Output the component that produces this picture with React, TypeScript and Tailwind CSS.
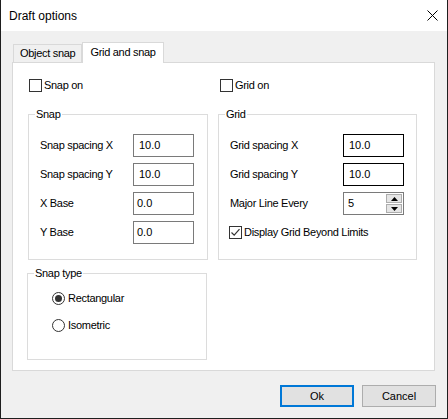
import React from 'react';

const font = "font-['Liberation_Sans',Arial,sans-serif]";

// Win32 style checkbox
const CheckBox = ({ label, checked = false }: { label: string; checked?: boolean }) => (
  <div className="flex items-center h-[13px]">
    <div className="w-[13px] h-[13px] border border-[#333333] bg-white flex items-center justify-center">
      {checked && (
        <svg width="11" height="11" viewBox="0 0 11 11">
          <path d="M1.5 5.5 L4.2 8.2 L9.5 2.2" fill="none" stroke="#333333" strokeWidth="1.2" />
        </svg>
      )}
    </div>
    <span className="ml-[2px] text-[11px] tracking-[-0.3px] leading-[13px] text-black">{label}</span>
  </div>
);

const Radio = ({ label, checked = false }: { label: string; checked?: boolean }) => (
  <div className="flex items-center h-[13px]">
    <div className="w-[13px] h-[13px] rounded-full border border-[#333333] bg-white flex items-center justify-center">
      {checked && <div className="w-[7px] h-[7px] rounded-full bg-[#333333]" />}
    </div>
    <span className="ml-[3px] text-[11px] tracking-[-0.3px] leading-[13px] text-black">{label}</span>
  </div>
);

const Group = ({ title, className, children }: { title: string; className: string; children: React.ReactNode }) => (
  <div className={`relative border border-[#dcdcdc] ${className}`}>
    <span className="absolute left-[6px] -top-[8px] px-[1px] bg-white text-[11px] tracking-[-0.3px] leading-[14px] text-black">
      {title}
    </span>
    {children}
  </div>
);

const Field = ({ value, dark = false, pad = 'pl-[5px]' }: { value: string; dark?: boolean; pad?: string }) => (
  <div
    className={`w-[61px] h-[23px] border bg-white flex items-center ${pad} text-[11px] text-black ${
      dark ? 'border-[#000000]' : 'border-[#7a7a7a]'
    }`}
  >
    {value}
  </div>
);

const Spinner = ({ value }: { value: string }) => (
  <div className="w-[61px] h-[23px] border border-[#7a7a7a] bg-white flex">
    <div className="flex-1 flex items-center pl-[4px] text-[11px] text-black">{value}</div>
    <div className="w-[17px] flex flex-col py-[1px] pr-[1px] gap-[1px]">
      <div className="flex-1 border border-[#adadad] bg-[#e5e5e5] flex items-center justify-center">
        <svg width="7" height="4" viewBox="0 0 7 4">
          <path d="M0 4 L3.5 0 L7 4 Z" fill="#000" />
        </svg>
      </div>
      <div className="flex-1 border border-[#adadad] bg-[#e5e5e5] flex items-center justify-center">
        <svg width="7" height="4" viewBox="0 0 7 4">
          <path d="M0 0 L7 0 L3.5 4 Z" fill="#000" />
        </svg>
      </div>
    </div>
  </div>
);

const Row = ({ label, labelW, children }: { label: string; labelW: string; children: React.ReactNode }) => (
  <div className="flex items-center h-[23px]">
    <div className={`${labelW} text-[11px] tracking-[-0.3px] text-black`}>{label}</div>
    {children}
  </div>
);

export default function App() {
  return (
    <div className={`w-[448px] h-[419px] flex flex-col border-x border-b border-[#1e1e1e] bg-[#f0f0f0] ${font}`}>
      {/* Title bar */}
      <div className="h-[31px] bg-white flex items-center justify-between pl-[8px] pr-[9px]">
        <span className="text-[12px] text-black">Draft options</span>
        <svg width="11" height="11" viewBox="0 0 11 11">
          <path d="M0.5 0.5 L10.5 10.5 M10.5 0.5 L0.5 10.5" stroke="#000" strokeWidth="1" />
        </svg>
      </div>

      <div className="flex-1 pt-[11px] px-[11px]">
        {/* Tabs */}
        <div className="flex items-end h-[20px]">
          <div className="ml-px h-[18px] px-[6px] border border-b-0 border-[#d9d9d9] bg-[#f0f0f0] flex items-center text-[11px] tracking-[-0.3px] text-black">
            Object snap
          </div>
          <div className="relative z-10 -mb-px h-[21px] px-[7px] border border-b-0 border-[#d9d9d9] bg-white flex items-center pb-[2px] text-[11px] tracking-[-0.3px] text-black">
            Grid and snap
          </div>
        </div>

        {/* Tab panel */}
        <div className="w-[423px] h-[309px] border border-[#d9d9d9] bg-white pt-[16px] pl-[15px]">
          <div className="flex">
            <div className="w-[190px] pl-px">
              <CheckBox label="Snap on" />
            </div>
            <div className="pl-[2px]">
              <CheckBox label="Grid on" />
            </div>
          </div>

          <div className="flex mt-[22px] gap-[10px]">
            <Group title="Snap" className="w-[180px] h-[146px]">
              <div className="pt-[19px] pl-[11px] flex flex-col gap-[6px]">
                <Row label="Snap spacing X" labelW="w-[93px]">
                  <Field value="10.0" />
                </Row>
                <Row label="Snap spacing Y" labelW="w-[93px]">
                  <Field value="10.0" />
                </Row>
                <Row label="X Base" labelW="w-[93px]">
                  <Field value="0.0" pad="pl-[3px]" />
                </Row>
                <Row label="Y Base" labelW="w-[93px]">
                  <Field value="0.0" pad="pl-[3px]" />
                </Row>
              </div>
            </Group>

            <Group title="Grid" className="w-[199px] h-[146px]">
              <div className="pt-[19px] pl-[11px] flex flex-col gap-[6px]">
                <Row label="Grid spacing X" labelW="w-[113px]">
                  <Field value="10.0" dark />
                </Row>
                <Row label="Grid spacing Y" labelW="w-[113px]">
                  <Field value="10.0" dark />
                </Row>
                <Row label="Major Line Every" labelW="w-[113px]">
                  <Spinner value="5" />
                </Row>
                <div className="h-[23px] flex items-center -ml-px">
                  <CheckBox label="Display Grid Beyond Limits" checked />
                </div>
              </div>
            </Group>
          </div>

          <Group title="Snap type" className="mt-[13px] -ml-px w-[180px] h-[87px]">
            <div className="pt-[18px] pl-[24px] flex flex-col gap-[14px]">
              <Radio label="Rectangular" checked />
              <Radio label="Isometric" />
            </div>
          </Group>
        </div>

        {/* Buttons */}
        <div className="mt-[14px] flex justify-end gap-[8px]">
          <button className="w-[74px] h-[22px] border-2 border-[#0078d7] bg-[#e1e1e1] text-[11px] text-black">
            Ok
          </button>
          <button className="w-[74px] h-[22px] border border-[#adadad] bg-[#e1e1e1] text-[11px] text-black">
            Cancel
          </button>
        </div>
      </div>
    </div>
  );
}
